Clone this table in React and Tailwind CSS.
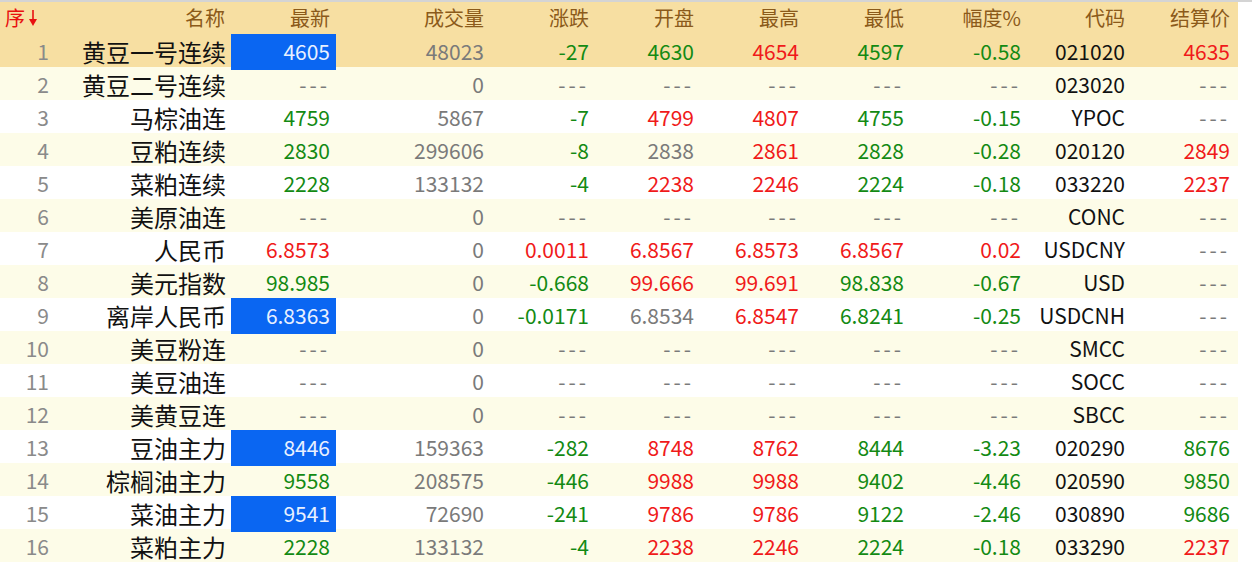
import React from "react";

const G = "text-[#138a13]";
const R = "text-[#f01a1a]";
const Y = "text-[#7a7a7a]";
const K = "text-[#111111]";
const D = "---";

const rows = [
  ["黄豆一号连续", ["4605", "W"], ["48023", Y], ["-27", G], ["4630", G], ["4654", R], ["4597", G], ["-0.58", G], "021020", ["4635", R]],
  ["黄豆二号连续", [D, Y], ["0", Y], [D, Y], [D, Y], [D, Y], [D, Y], [D, Y], "023020", [D, Y]],
  ["马棕油连", ["4759", G], ["5867", Y], ["-7", G], ["4799", R], ["4807", R], ["4755", G], ["-0.15", G], "YPOC", [D, Y]],
  ["豆粕连续", ["2830", G], ["299606", Y], ["-8", G], ["2838", Y], ["2861", R], ["2828", G], ["-0.28", G], "020120", ["2849", R]],
  ["菜粕连续", ["2228", G], ["133132", Y], ["-4", G], ["2238", R], ["2246", R], ["2224", G], ["-0.18", G], "033220", ["2237", R]],
  ["美原油连", [D, Y], ["0", Y], [D, Y], [D, Y], [D, Y], [D, Y], [D, Y], "CONC", [D, Y]],
  ["人民币", ["6.8573", R], ["0", Y], ["0.0011", R], ["6.8567", R], ["6.8573", R], ["6.8567", R], ["0.02", R], "USDCNY", [D, Y]],
  ["美元指数", ["98.985", G], ["0", Y], ["-0.668", G], ["99.666", R], ["99.691", R], ["98.838", G], ["-0.67", G], "USD", [D, Y]],
  ["离岸人民币", ["6.8363", "W"], ["0", Y], ["-0.0171", G], ["6.8534", Y], ["6.8547", R], ["6.8241", G], ["-0.25", G], "USDCNH", [D, Y]],
  ["美豆粉连", [D, Y], ["0", Y], [D, Y], [D, Y], [D, Y], [D, Y], [D, Y], "SMCC", [D, Y]],
  ["美豆油连", [D, Y], ["0", Y], [D, Y], [D, Y], [D, Y], [D, Y], [D, Y], "SOCC", [D, Y]],
  ["美黄豆连", [D, Y], ["0", Y], [D, Y], [D, Y], [D, Y], [D, Y], [D, Y], "SBCC", [D, Y]],
  ["豆油主力", ["8446", "W"], ["159363", Y], ["-282", G], ["8748", R], ["8762", R], ["8444", G], ["-3.23", G], "020290", ["8676", G]],
  ["棕榈油主力", ["9558", G], ["208575", Y], ["-446", G], ["9988", R], ["9988", R], ["9402", G], ["-4.46", G], "020590", ["9850", G]],
  ["菜油主力", ["9541", "W"], ["72690", Y], ["-241", G], ["9786", R], ["9786", R], ["9122", G], ["-2.46", G], "030890", ["9686", G]],
  ["菜粕主力", ["2228", G], ["133132", Y], ["-4", G], ["2238", R], ["2246", R], ["2224", G], ["-0.18", G], "033290", ["2237", R]],
];

const GRID =
  "grid grid-cols-[55px_176px_105px_154px_105px_105px_105px_105px_117px_104px_107px]";

function Num({ v, cls, last }) {
  const isDash = v === D;
  return (
    <div
      className={`flex items-center justify-end ${last ? "pr-[8px]" : "pr-[6px]"} text-[21px] ${cls} ${isDash ? "tracking-[3px]" : ""}`}
    >
      {v}
    </div>
  );
}

function Arrow() {
  return (
    <svg width="10" height="18" viewBox="0 0 10 18" className="ml-[3px]">
      <line x1="5" y1="1" x2="5" y2="11" stroke="#e81010" strokeWidth="1.6" />
      <polygon points="1,10 9,10 5,17" fill="#e81010" />
    </svg>
  );
}

export default function App() {
  const headers = ["名称", "最新", "成交量", "涨跌", "开盘", "最高", "最低", "幅度%", "代码", "结算价"];
  return (
    <div className="w-[1252px] h-[571px] bg-white border-t-2 border-[#d4d4d4] overflow-hidden font-['Noto_Sans_CJK_SC',sans-serif]">
      <div className="w-[1238px]">
        <div className={`${GRID} h-[32px] bg-[#f7dfa2]`}>
          <div className="flex items-center pl-[5px] text-[20px] text-[#e81010]">
            序<Arrow />
          </div>
          {headers.map((h, i) => (
            <div
              key={h}
              className={`flex items-center justify-end ${i === headers.length - 1 ? "pr-[8px]" : "pr-[6px]"} text-[20px] text-[#8b5a1a]`}
            >
              {h}
            </div>
          ))}
        </div>
        {rows.map((r, idx) => {
          const n = idx + 1;
          const bg = n === 1 ? "bg-[#f7dfa2]" : n % 2 === 0 ? "bg-[#fdfce8]" : "bg-white";
          const [name, latest, vol, chg, open, high, low, amp, code, settle] = r;
          return (
            <div key={n} className={`${GRID} h-[33px] ${bg}`}>
              <div className="flex items-center justify-end pr-[6px] text-[21px] text-[#8a8a8a]">
                {n}
              </div>
              <div className="flex items-center justify-end pr-[5px] text-[24px] text-[#111]">
                {name}
              </div>
              {latest[1] === "W" ? (
                <div className="flex items-center justify-end pr-[6px] bg-[#0a66f2] text-[21px] text-[#e8f0ff]">
                  {latest[0]}
                </div>
              ) : (
                <Num v={latest[0]} cls={latest[1]} />
              )}
              <Num v={vol[0]} cls={vol[1]} />
              <Num v={chg[0]} cls={chg[1]} />
              <Num v={open[0]} cls={open[1]} />
              <Num v={high[0]} cls={high[1]} />
              <Num v={low[0]} cls={low[1]} />
              <Num v={amp[0]} cls={amp[1]} />
              <Num v={code} cls={K} />
              <Num v={settle[0]} cls={settle[1]} last />
            </div>
          );
        })}
      </div>
    </div>
  );
}
